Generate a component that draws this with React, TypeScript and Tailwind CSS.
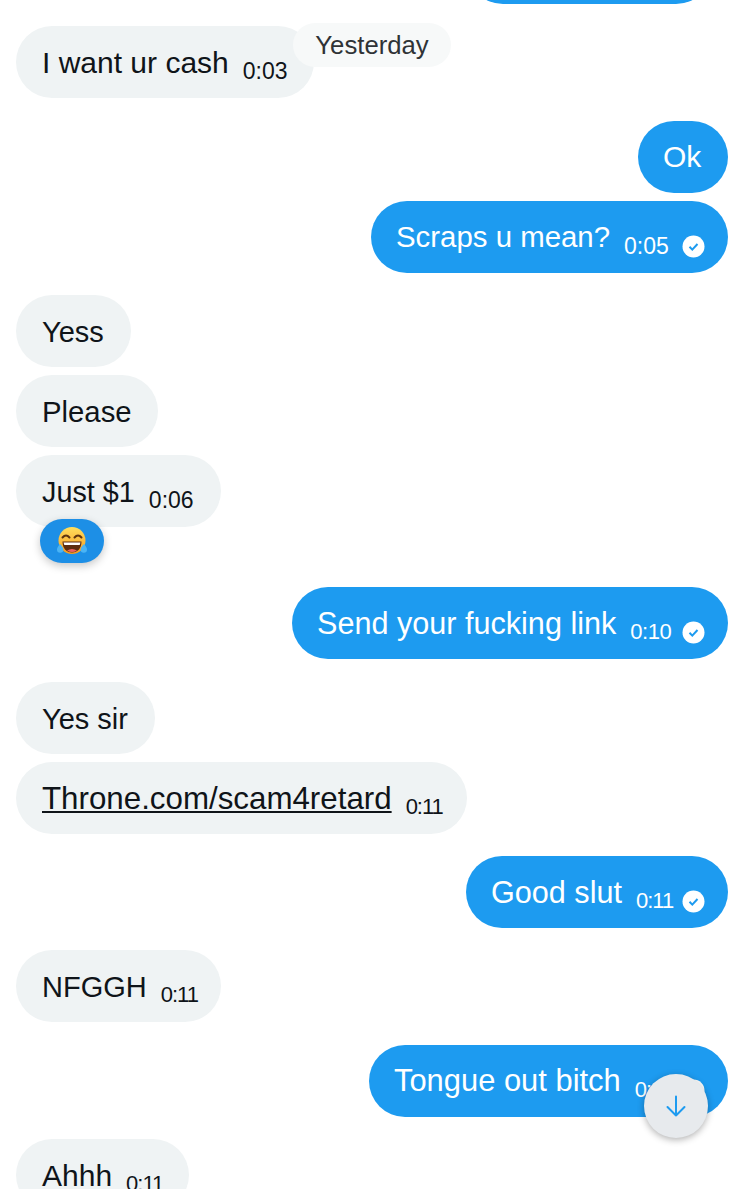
const sans = "font-['Liberation_Sans',Arial,sans-serif]";

type Msg = {
  text: string;
  size: string;
  time?: string;
  mine?: boolean;
  link?: boolean;
  gap: string;
  reaction?: boolean;
  width: string;
};

const MESSAGES: Msg[] = [
  { text: "Ok", size: "text-[30px]", mine: true, gap: "mt-[23px]", width: "w-[90px]" },
  { text: "Scraps u mean?", size: "text-[29.4px]", time: "0:05", mine: true, gap: "mt-[8px]", width: "w-[357px]" },
  { text: "Yess", size: "text-[29px]", gap: "mt-[22px]", width: "w-[115px]" },
  { text: "Please", size: "text-[29.3px]", gap: "mt-[8px]", width: "w-[142px]" },
  { text: "Just $1", size: "text-[28.8px]", time: "0:06", gap: "mt-[8px]", reaction: true, width: "w-[205px]" },
  { text: "Send your fucking link", size: "text-[30.6px]", time: "0:10", mine: true, gap: "mt-[60px]", width: "w-[436px]" },
  { text: "Yes sir", size: "text-[29px]", gap: "mt-[23px]", width: "w-[139px]" },
  { text: "Throne.com/scam4retard", size: "text-[31.3px]", time: "0:11", link: true, gap: "mt-[8px]", width: "w-[451px]" },
  { text: "Good slut", size: "text-[30.6px]", time: "0:11", mine: true, gap: "mt-[22px]", width: "w-[262px]" },
  { text: "NFGGH", size: "text-[29px]", time: "0:11", gap: "mt-[22px]", width: "w-[205px]" },
  { text: "Tongue out bitch", size: "text-[30.9px]", time: "0:11", mine: true, gap: "mt-[23px]", width: "w-[359px]" },
  { text: "Ahhh", size: "text-[30px]", time: "0:11", gap: "mt-[22px]", width: "w-[173px]" },
];

function SeenIcon() {
  return (
    <svg width="23" height="23" viewBox="0 0 23 23" className="ml-auto mr-[23px] mt-[18px] shrink-0">
      <circle cx="11.5" cy="11.5" r="11" fill="#ffffff" />
      <path d="M7.5 11.8l2.8 2.8 5.2-5.6" fill="none" stroke="#1d9bf0" strokeWidth="2" />
    </svg>
  );
}

function LaughEmoji() {
  return (
    <svg width="32" height="30" viewBox="0 0 32 30">
      <defs>
        <linearGradient id="face" x1="0" y1="0" x2="0" y2="1">
          <stop offset="0" stopColor="#ffdf5e" />
          <stop offset="1" stopColor="#f59a1f" />
        </linearGradient>
      </defs>
      <circle cx="16" cy="14.5" r="13.5" fill="url(#face)" />
      <path d="M6.5 11.5q3.5-4 7 0M18.5 11.5q3.5-4 7 0" fill="none" stroke="#5d3410" strokeWidth="2" strokeLinecap="round" />
      <path d="M6.5 15.5h19c0 7-4 11-9.500 11s-9.500-4-9.500-11z" fill="#5d2d10" />
      <path d="M7.500 16.500h17l-.8 2.500h-15.400z" fill="#ffffff" />
      <path d="M11 24.500q5-3 10 0q-5 3-10 0z" fill="#f0625f" />
      <path d="M4 18c-1.800 2.200-3 4-3 5.500a3.200 3.200 0 0 0 6.400 0c0-1.500-1.400-3.500-3.400-5.500zM28 18c1.800 2.200 3 4 3 5.500a3.200 3.200 0 0 1-6.400 0c0-1.500 1.400-3.500 3.400-5.500z" fill="#4ab4f5" />
    </svg>
  );
}

function Bubble({ msg }: { msg: Msg }) {
  const tone = msg.mine ? "bg-[#1d9bf0] text-white pl-[25px]" : "bg-[#eff3f4] text-[#0f1419] pl-[26px]";
  const timeFit =
    msg.time === "0:11" ? "text-[22px] tracking-[-1px]" : msg.time === "0:10" ? "text-[22px] tracking-[-0.5px]" : "text-[23px]";
  return (
    <div className={`flex ${msg.mine ? "justify-end" : "justify-start"} ${msg.gap}`}>
      <div className={`relative flex h-[72px] shrink-0 items-center rounded-[36px] ${msg.width} ${tone}`}>
        <span className={`whitespace-nowrap leading-[36px] ${msg.size} ${msg.mine ? "" : "mt-[2px]"} ${msg.link ? "underline underline-offset-[2px] decoration-[2px]" : ""}`}>
          {msg.text}
        </span>
        {msg.time && (
          <span className={`ml-[14px] mt-[18px] whitespace-nowrap leading-[26px] ${timeFit}`}>
            {msg.time}
          </span>
        )}
        {msg.mine && msg.time && <SeenIcon />}
        {msg.reaction && (
          <div className="absolute left-[24px] top-[64px] flex h-[44px] w-[64px] items-center justify-center rounded-[22px] bg-[#1d8fe6] shadow-[0_3px_8px_rgba(0,0,0,0.22)]">
            <LaughEmoji />
          </div>
        )}
      </div>
    </div>
  );
}

export default function App() {
  return (
    <div className={`relative h-[1200px] w-[743px] overflow-hidden bg-white ${sans}`}>
      <div className="h-[1189px] overflow-hidden px-[15px] pl-[16px]">
        {/* cut off bubble from the previous group */}
        <div className="-mt-[68px] flex justify-end pr-[16px]">
          <div className="h-[72px] w-[245px] rounded-[36px] bg-[#1d9bf0]" />
        </div>

        <div className="relative mt-[22px] flex justify-start">
          <div className="flex h-[72px] w-[298px] items-center rounded-[36px] bg-[#eff3f4] pl-[26px] text-[#0f1419]">
            <span className="mt-[2px] whitespace-nowrap text-[30px] leading-[36px]">I want ur cash</span>
            <span className="ml-[14px] mt-[18px] whitespace-nowrap text-[23px] leading-[26px]">0:03</span>
          </div>
          <div className="absolute left-[277px] top-[-3px] flex h-[44px] w-[158px] items-center justify-center rounded-[22px] bg-[#f7f9f9] text-[25.7px] text-[#2f3336]">
            Yesterday
          </div>
        </div>

        {MESSAGES.map((m) => (
          <Bubble key={m.text} msg={m} />
        ))}
      </div>

      <div className="absolute left-[644px] top-[1074px] flex h-[64px] w-[64px] items-center justify-center rounded-full bg-[#e7eaed] shadow-[0_2px_7px_rgba(0,0,0,0.3)]">
        <svg width="22" height="24" viewBox="0 0 22 24" fill="none" stroke="#1d9bf0" strokeWidth="2" strokeLinecap="round" strokeLinejoin="round">
          <path d="M11 2.500v19M2.500 13L11 21.500l8.500-8.500" />
        </svg>
      </div>
    </div>
  );
}
